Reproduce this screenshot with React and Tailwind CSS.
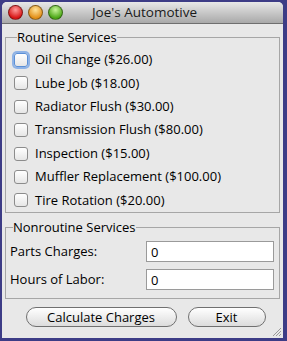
import React, { useState } from 'react';

const services = [
  "Oil Change ($26.00)",
  "Lube Job ($18.00)",
  "Radiator Flush ($30.00)",
  "Transmission Flush ($80.00)",
  "Inspection ($15.00)",
  "Muffler Replacement ($100.00)",
  "Tire Rotation ($20.00)",
];

const font = { fontFamily: '"Open Sans", "DejaVu Sans", sans-serif' };

const Light = ({ from, to }) => (
  <div
    className="w-[15px] h-[15px] rounded-full border border-black/40"
    style={{ background: `radial-gradient(circle at 50% 30%, ${from}, ${to} 70%)` }}
  />
);

const App = () => {
  const [checked, setChecked] = useState(services.map(() => false));
  const [parts, setParts] = useState("0");
  const [hours, setHours] = useState("0");

  const toggle = (i) => {
    setChecked(checked.map((c, j) => (j === i ? !c : c)));
  };

  return (
    <div className="w-[287px] h-[341px] bg-[#3d3c86] pt-[2px] pl-[2px]" style={font}>
      <div className="w-[281px] h-[336px] bg-[#e8e8e8] rounded-t-[5px] flex flex-col relative overflow-hidden">
        {/* title bar */}
        <div className="h-[22px] shrink-0 flex items-center relative bg-gradient-to-b from-[#e8e8e8] to-[#a9a9a9] border-b border-[#6f6f6f]">
          <div className="flex gap-[5px] pl-[6px]">
            <Light from="#ff9a9a" to="#d81818" />
            <Light from="#ffe39a" to="#e2901a" />
            <Light from="#c8f59a" to="#4ea819" />
          </div>
          <div className="absolute inset-0 flex items-center justify-center text-[13.5px] text-[#1a1a1a] pl-[4px]">
            Joe's Automotive
          </div>
        </div>

        <div className="px-[3px] pt-[5px] flex flex-col">
          <fieldset className="border border-[#a6a6a6] h-[184px] pl-[8px] pt-[8px]">
            <legend className="text-[13px] text-black ml-[3px] leading-[16px]">Routine Services</legend>
            <div className="flex flex-col gap-[9.4px]">
              {services.map((s, i) => (
                <label key={s} className="flex items-center gap-[7px] h-[14px] text-[13px] text-black">
                  <span
                    onClick={() => toggle(i)}
                    className={
                      "w-[14px] h-[14px] rounded-[3px] border bg-gradient-to-b from-white to-[#e6e6e6] " +
                      (i === 0 ? "border-[#5b8fd6] shadow-[0_0_0_2px_#8fb3e6]" : "border-[#8c8c8c]")
                    }
                  >
                    {checked[i] ? <span className="block text-[11px] leading-[12px] text-center">✓</span> : null}
                  </span>
                  <span>{s}</span>
                </label>
              ))}
            </div>
          </fieldset>

          <fieldset className="border border-[#a6a6a6] h-[80px] mt-[6px] pl-[4px] pr-[5px] pt-[6px]">
            <legend className="text-[13px] text-black ml-[3px] leading-[16px]">Nonroutine Services</legend>
            <div className="flex flex-col gap-[7px]">
              <div className="flex items-center justify-between">
                <span className="text-[13px] text-black">Parts Charges:</span>
                <input
                  value={parts}
                  onChange={({ target }) => setParts(target.value)}
                  className="w-[128px] h-[21px] bg-white border border-[#9a9a9a] px-[4px] text-[13px] outline-none"
                  style={font}
                />
              </div>
              <div className="flex items-center justify-between">
                <span className="text-[13px] text-black">Hours of Labor:</span>
                <input
                  value={hours}
                  onChange={({ target }) => setHours(target.value)}
                  className="w-[128px] h-[21px] bg-white border border-[#9a9a9a] px-[4px] text-[13px] outline-none"
                  style={font}
                />
              </div>
            </div>
          </fieldset>

          <div className="flex justify-center gap-[11px] mt-[8px] pl-[6px]">
            <button className="w-[151px] h-[20px] rounded-full border border-[#707070] bg-gradient-to-b from-white to-[#dcdcdc] text-[13px] text-black leading-none">
              Calculate Charges
            </button>
            <button className="w-[78px] h-[20px] rounded-full border border-[#707070] bg-gradient-to-b from-white to-[#dcdcdc] text-[13px] text-black leading-none">
              Exit
            </button>
          </div>
        </div>

        {/* resize grip */}
        <svg className="absolute right-[1px] bottom-[1px]" width="11" height="11" viewBox="0 0 11 11">
          <path d="M10 2 L2 10 M10 5 L5 10 M10 8 L8 10" stroke="#9a9a9a" strokeWidth="1" />
        </svg>
      </div>
    </div>
  );
};

export default App;
